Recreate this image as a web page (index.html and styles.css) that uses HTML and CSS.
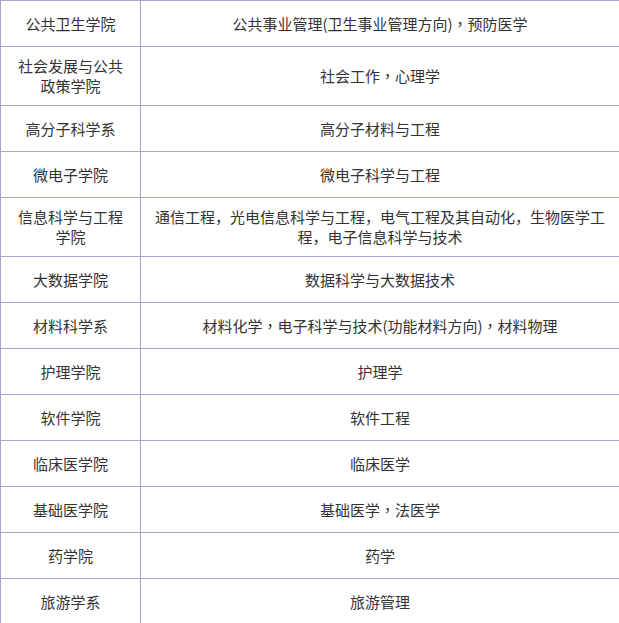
FILE: index.html
```html
<!DOCTYPE html>
<html lang="zh-CN">
<head>
<meta charset="utf-8">
<title>学院与专业</title>
<link rel="stylesheet" href="styles.css">
</head>
<body>
<div class="table">
  <div class="row"><div class="cell name">公共卫生学院</div><div class="cell major">公共事业管理(卫生事业管理方向)<span class="sep">，</span>预防医学</div></div>
  <div class="row"><div class="cell name">社会发展与公共政策学院</div><div class="cell major">社会工作<span class="sep">，</span>心理学</div></div>
  <div class="row"><div class="cell name">高分子科学系</div><div class="cell major">高分子材料与工程</div></div>
  <div class="row"><div class="cell name">微电子学院</div><div class="cell major">微电子科学与工程</div></div>
  <div class="row"><div class="cell name">信息科学与工程学院</div><div class="cell major"><span>通信工程<span class="sep">，</span>光电信息科学与工程<span class="sep">，</span>电气工程及其自动化<span class="sep">，</span>生物医学工程<span class="sep">，</span>电子信息科学与技术</span></div></div>
  <div class="row"><div class="cell name">大数据学院</div><div class="cell major">数据科学与大数据技术</div></div>
  <div class="row"><div class="cell name">材料科学系</div><div class="cell major">材料化学<span class="sep">，</span>电子科学与技术(功能材料方向)<span class="sep">，</span>材料物理</div></div>
  <div class="row"><div class="cell name">护理学院</div><div class="cell major">护理学</div></div>
  <div class="row"><div class="cell name">软件学院</div><div class="cell major">软件工程</div></div>
  <div class="row"><div class="cell name">临床医学院</div><div class="cell major">临床医学</div></div>
  <div class="row"><div class="cell name">基础医学院</div><div class="cell major">基础医学<span class="sep">，</span>法医学</div></div>
  <div class="row"><div class="cell name">药学院</div><div class="cell major">药学</div></div>
  <div class="row"><div class="cell name">旅游学系</div><div class="cell major">旅游管理</div></div>
</div>
</body>
</html>
```

FILE: styles.css
```css
html, body {
  margin: 0;
  padding: 0;
  background: #ffffff;
}

body {
  font-family: "Noto Sans CJK SC", "Noto Sans", sans-serif;
  font-size: 15px;
  line-height: 20px;
  color: #333333;
}

.table {
  width: 620px;
  border-left: 1px solid #aba3d4;
  border-top: 1px solid #aba3d4;
  box-sizing: border-box;
}

.row {
  display: grid;
  grid-template-columns: 140px 1fr;
  border-bottom: 1px solid #aba3d4;
}

.cell {
  display: flex;
  align-items: center;
  justify-content: center;
  text-align: center;
  min-height: 45px;
  padding: 9px 8px;
  box-sizing: border-box;
}

.name {
  border-right: 1px solid #aba3d4;
  padding-left: 12px;
  padding-right: 12px;
}

.major {
  border-right: 1px solid #aba3d4;
}

.sep {
  font-family: "Noto Sans CJK TC", "Noto Sans CJK SC", sans-serif;
}
```
